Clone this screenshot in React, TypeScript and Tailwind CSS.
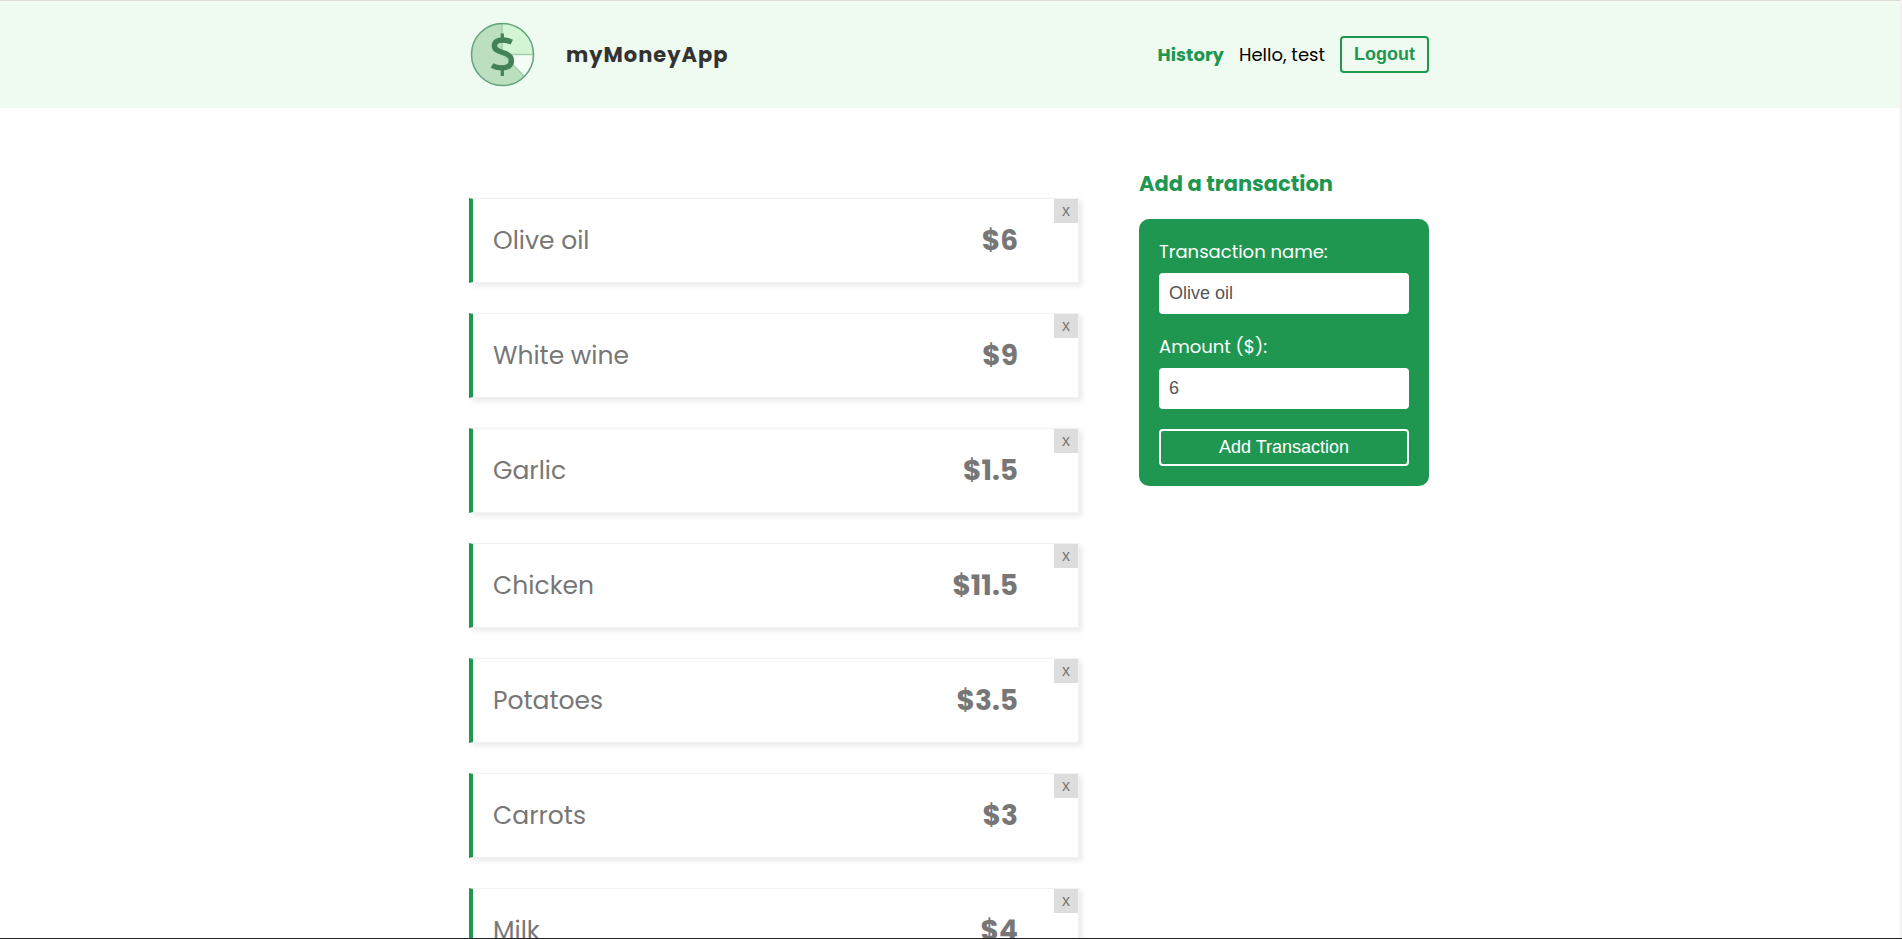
import { useState } from "react";
import type { FormEvent } from "react";

type Transaction = { id: number; name: string; amount: string };

const initialTransactions: Transaction[] = [
  { id: 7, name: "Olive oil", amount: "6" },
  { id: 6, name: "White wine", amount: "9" },
  { id: 5, name: "Garlic", amount: "1.5" },
  { id: 4, name: "Chicken", amount: "11.5" },
  { id: 3, name: "Potatoes", amount: "3.5" },
  { id: 2, name: "Carrots", amount: "3" },
  { id: 1, name: "Milk", amount: "4" },
];

function Logo() {
  return (
    <svg viewBox="-1.5 -1.5 67 67" className="size-[67px] shrink-0" aria-hidden="true">
      <circle cx="32" cy="32" r="31" fill="#bbdfbf" />
      <path d="M32 32V1a31 31 0 0 1 31 31z" fill="#d3f5d3" />
      <path d="M32 32h31a31 31 0 0 1-9.1 21.9z" fill="#f4fdf5" />
      <path d="M31.5 1v31h31M32 32l21.9 21.9" fill="none" stroke="#a3d2ad" strokeWidth="1.5" />
      <circle cx="32" cy="32" r="31" fill="none" stroke="#62a37c" strokeWidth="1.5" />
      <path
        d="M41.3 19.6c-3-1.5-6-2.1-9.2-2.1-5.2 0-8.2 2.1-8.2 5.7 0 4 3.8 5.4 8.3 6.8 4.9 1.5 8.7 3.2 8.7 8 0 5-3.7 7.4-9.4 7.4-3.7 0-7.1-.8-10-2.4"
        fill="none"
        stroke="#438157"
        strokeWidth="5.4"
      />
      <path d="M31.8 11v6M31.8 46v7.5" stroke="#438157" strokeWidth="3.2" />
    </svg>
  );
}

function Navbar() {
  return (
    <header className="border-t border-[#dadada] bg-[#effaf1]">
      <nav className="mx-auto flex h-[107px] max-w-[962px] items-center pr-[2px]">
        <Logo />
        <h1 className="ml-[30px] text-[21px] font-bold tracking-[1px] text-[#333]">myMoneyApp</h1>
        <div className="ml-auto flex items-center gap-[15px]">
          <a href="#history" className="text-lg font-bold text-[#1f9751]">
            History
          </a>
          <span className="text-lg">Hello, test</span>
          <button
            type="button"
            className="h-[37px] rounded border-2 border-[#1f9751] px-3 pb-[2px] font-['Liberation_Sans',sans-serif] text-lg leading-none font-bold text-[#1f9751]"
          >
            Logout
          </button>
        </div>
      </nav>
    </header>
  );
}

function TransactionItem({ item, onDelete }: { item: Transaction; onDelete: () => void }) {
  return (
    <li className="relative flex h-[85px] items-center border border-l-4 border-[#f2f2f2] border-l-[#1f9751] pr-[60px] pl-5 text-[#777] shadow-[3px_3px_5px_rgba(50,50,50,0.1)]">
      <p className="text-[25px]">{item.name}</p>
      <p className="ml-auto text-[28px] font-bold">${item.amount}</p>
      <button
        type="button"
        aria-label={`Delete ${item.name}`}
        onClick={onDelete}
        className="absolute top-0 right-0 size-6 bg-[#ddd] font-['Liberation_Sans',sans-serif] text-base leading-none text-[#777]"
      >
        x
      </button>
    </li>
  );
}

const inputClass =
  "block h-[41px] w-full rounded bg-white px-[10px] font-['Liberation_Sans',sans-serif] text-lg text-[#555] outline-none";

function TransactionForm({ onAdd }: { onAdd: (name: string, amount: string) => void }) {
  const [name, setName] = useState("Olive oil");
  const [amount, setAmount] = useState("6");

  const handleSubmit = (e: FormEvent) => {
    e.preventDefault();
    onAdd(name, amount);
  };

  return (
    <aside className="w-[290px] shrink-0">
      <h2 className="text-[21px] leading-[30px] font-bold text-[#1f9751]">Add a transaction</h2>
      <form onSubmit={handleSubmit} className="mt-5 rounded-[10px] bg-[#1f9751] p-5 text-white">
        <label htmlFor="name" className="block h-[34px] text-lg leading-[26px]">
          Transaction name:
        </label>
        <input id="name" type="text" required value={name} onChange={(e) => setName(e.target.value)} className={inputClass} />
        <label htmlFor="amount" className="mt-5 block h-[34px] text-lg leading-[26px]">
          Amount ($):
        </label>
        <input id="amount" type="text" inputMode="decimal" required value={amount} onChange={(e) => setAmount(e.target.value)} className={inputClass} />
        <button
          type="submit"
          className="mt-5 h-[37px] w-full rounded border-2 border-white pb-[2px] font-['Liberation_Sans',sans-serif] text-lg leading-none"
        >
          Add Transaction
        </button>
      </form>
    </aside>
  );
}

export default function App() {
  const [items, setItems] = useState(initialTransactions);

  return (
    <div className="flex h-screen flex-col border-b border-[#222] bg-white font-[Poppins,Inter,sans-serif] text-black">
      <div className="min-h-0 flex-1 overflow-hidden border-r-2 border-[#f1f1f1]">
        <Navbar />
        <main className="mx-auto flex max-w-[962px] items-start gap-[60px] pt-[61px] pr-[2px]">
          <ul className="mt-[29px] flex min-w-0 flex-1 flex-col gap-[30px]">
            {items.map((item) => (
              <TransactionItem
                key={item.id}
                item={item}
                onDelete={() => setItems(items.filter((t) => t.id !== item.id))}
              />
            ))}
          </ul>
          <TransactionForm
            onAdd={(name, amount) => setItems([{ id: Date.now(), name, amount }, ...items])}
          />
        </main>
      </div>
    </div>
  );
}
